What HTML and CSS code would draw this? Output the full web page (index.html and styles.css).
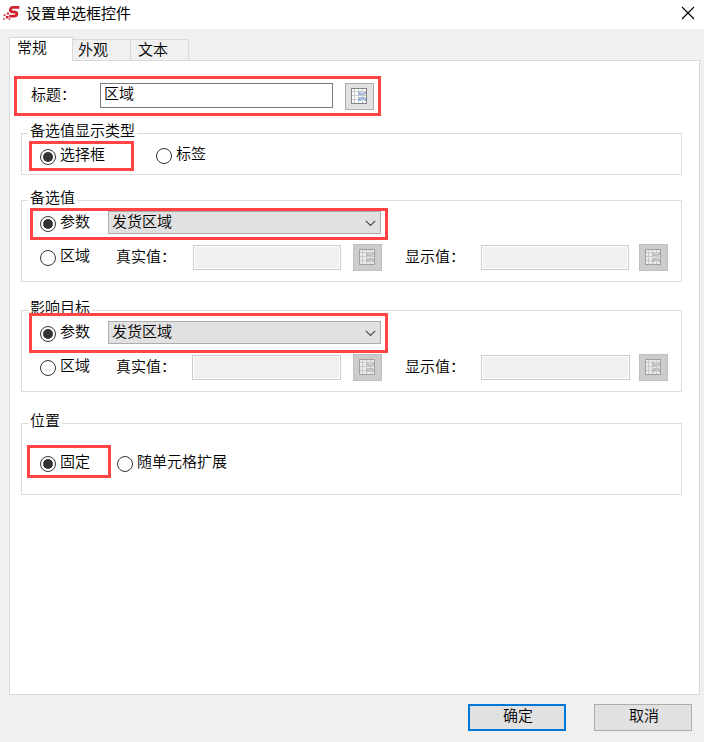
FILE: index.html
```html
<!DOCTYPE html>
<html lang="zh-CN">
<head>
<meta charset="utf-8">
<title>设置单选框控件</title>
<link rel="stylesheet" href="styles.css">
</head>
<body>
<svg class="defs" width="0" height="0" aria-hidden="true">
  <symbol id="grid" viewBox="0 0 16 16">
    <rect x=".5" y=".5" width="15" height="15" fill="#fff" stroke="#858585"/>
    <path d="M3.5 1v14M7.5 1v14M11.5 1v14M1 3.5h14M1 7.5h14M1 11.5h14" stroke="#c9c9cd" fill="none"/>
    <path d="M7 4h3v1h1v2h-3V6H7zM12 5h1V4h2v2h-1v1h-2zM8 9h3v3h-1v1H7v-2h1zM12 9h2v1h1v3h-2v-1h-1z" fill="#93b5dc"/>
    <path d="M9 5h1v1H9zM13 6h1v1h-1zM9 10h1v1H9zM13 11h1v1h-1z" fill="#c2d8f0"/>
  </symbol>
</svg>
<div class="dialog">
  <header class="titlebar">
    <svg class="logo" width="18" height="18" viewBox="0 0 18 18">
      <path d="M16.4 2.4H10.2Q7.9 2.4 7.4 4.7Q7 6.7 9.4 6.9L12.2 7.2Q14.2 7.5 13.8 9.2Q13.4 11.1 11.4 11.1H6.2" fill="none" stroke="#cf1f2b" stroke-width="2.8"/>
      <path d="M3.9 7.4h2v2h-2zM.7 9.3h1.7V11H.7zM2.9 10.9h2.7v2.7H2.9zM.3 13.2h1.5v1.5H.3zM5.8 13.6h1.5v1.5H5.8z" fill="#cf1f2b"/>
    </svg>
    <h1>设置单选框控件</h1>
    <svg class="close" width="14" height="14" viewBox="0 0 14 14"><path d="M1 1l12 12M13 1L1 13" stroke="#000" stroke-width="1.1"/></svg>
  </header>
  <nav class="tabs"><span class="tab active">常规</span><span class="tab">外观</span><span class="tab">文本</span></nav>
  <main class="panel">
    <div class="title-row">
      <i class="mark mark-title"></i>
      <span class="caption">标题：</span>
      <div class="input">区域</div>
      <div class="pick"><svg width="16" height="16"><use href="#grid"/></svg></div>
    </div>

    <section class="group type">
      <span class="legend">备选值显示类型</span>
      <i class="mark mark-type"></i>
      <div class="options">
        <span class="radio on"></span><span class="label box">选择框</span>
        <span class="radio up"></span><span class="label tag">标签</span>
      </div>
    </section>

    <section class="group values">
      <span class="legend">备选值</span>
      <i class="mark mark-values"></i>
      <div class="param">
        <span class="radio on"></span><span class="label">参数</span>
        <div class="select"><span>发货区域</span><svg width="11" height="7" viewBox="0 0 11 7"><path d="M.8 .9l4.7 4.6L10.2 .9" fill="none" stroke="#444" stroke-width="1.1"/></svg></div>
      </div>
      <div class="area">
        <span class="radio"></span><span class="label">区域</span>
        <span class="field real">真实值：</span><div class="input off"></div><div class="pick off"><svg width="16" height="16"><use href="#grid"/></svg></div>
        <span class="field shown">显示值：</span><div class="input off"></div><div class="pick off last"><svg width="16" height="16"><use href="#grid"/></svg></div>
      </div>
    </section>

    <section class="group target">
      <span class="legend">影响目标</span>
      <i class="mark mark-target"></i>
      <div class="param">
        <span class="radio on"></span><span class="label">参数</span>
        <div class="select"><span>发货区域</span><svg width="11" height="7" viewBox="0 0 11 7"><path d="M.8 .9l4.7 4.6L10.2 .9" fill="none" stroke="#444" stroke-width="1.1"/></svg></div>
      </div>
      <div class="area">
        <span class="radio"></span><span class="label">区域</span>
        <span class="field real">真实值：</span><div class="input off"></div><div class="pick off"><svg width="16" height="16"><use href="#grid"/></svg></div>
        <span class="field shown">显示值：</span><div class="input off"></div><div class="pick off last"><svg width="16" height="16"><use href="#grid"/></svg></div>
      </div>
    </section>

    <section class="group place">
      <span class="legend">位置</span>
      <i class="mark mark-place"></i>
      <div class="options">
        <span class="radio on"></span><span class="label fixed">固定</span>
        <span class="radio"></span><span class="label">随单元格扩展</span>
      </div>
    </section>
  </main>
  <footer class="actions"><div class="button primary">确定</div><div class="button">取消</div></footer>
</div>
</body>
</html>
```

FILE: styles.css
```css
* { box-sizing: border-box; }
body {
  margin: 0;
  background: #f0f0f0;
  color: #000;
  font: 350 15px/16px "Noto Sans CJK SC", sans-serif;
}
.defs { display: block; position: absolute; }
.dialog { display: flex; flex-direction: column; width: 704px; height: 742px; }
svg { display: block; flex: none; }

.titlebar { display: flex; flex: none; height: 29px; padding: 5px 9px 0 3px; background: #fff; }
.titlebar h1 { flex: 1; margin: 0 0 0 5px; font-size: 15px; font-weight: 400; }
.close { margin-top: 1px; }

.tabs { display: flex; flex: none; align-items: flex-end; height: 31px; padding-left: 9px; }
.tab {
  width: 58px; height: 21px; padding: 1px 0 0 5px;
  border: 1px solid #d9d9d9; border-left: 0; border-bottom: 0;
}
.tab + .tab + .tab { padding-left: 7px; }
.tab.active {
  position: relative; z-index: 1;
  width: 64px; height: 24px; margin-bottom: -1px; padding: 1px 0 0 7px;
  border-left: 1px solid #d9d9d9; background: #fff;
}

.panel {
  flex: none; width: 691px; height: 635px; margin-left: 9px; padding: 22px 0 0 11px;
  border: 1px solid #d9d9d9; background: #fff;
}
.title-row { position: relative; display: flex; align-items: flex-start; height: 50px; padding-left: 10px; }
.caption { width: 69px; padding-top: 3px; }
.input { flex: none; width: 233px; height: 25px; padding: 1px 3px; border: 1px solid #7a7a7a; background: #fff; }
.input.off { width: 148px; margin-top: 1px; border-color: #ccc; background: #f0f0f0; box-shadow: inset 0 0 0 1px #fff; }
.pick { flex: none; width: 29px; height: 27px; margin-left: 12px; padding: 4px 5px; border: 1px solid #adadad; background: #e1e1e1; }
.pick.off { border-color: #bfbfbf; background: #ccc; }
.pick.off svg { filter: grayscale(1); opacity: .6; }
.pick.last { margin-left: 10px; }

.group { position: relative; width: 661px; border: 1px solid #dcdcdc; }
.legend { position: absolute; left: 6px; top: -12px; padding: 0 2px; background: #fff; white-space: nowrap; }
.type { height: 42px; }
.values { height: 82px; margin-top: 25px; }
.target { height: 82px; margin-top: 28px; }
.place { height: 72px; margin-top: 31px; }
.type .options { padding-top: 12px; }
.place .options { padding-top: 29px; }
.options, .param, .area { display: flex; align-items: flex-start; padding-left: 18px; }

.radio {
  display: grid; flex: none; place-items: center;
  width: 16px; height: 16px; margin-top: 3px;
  border: 1px solid #333; border-radius: 50%; background: #fff;
}
.radio.up { margin-top: 2px; }
.radio.on::after { content: ""; width: 10px; height: 10px; border-radius: 50%; background: #333; }
.label { padding-left: 4px; white-space: nowrap; }
.label.box { width: 100px; }
.label.tag { margin-top: -1px; }
.label.fixed { width: 61px; }

.param { height: 33px; padding-top: 10px; }
.param .radio { margin-top: 5px; }
.param .label { width: 52px; padding-top: 2px; }
.select {
  display: flex; justify-content: space-between; width: 273px; height: 23px;
  padding: 1px 4px 0 3px; border: 1px solid #adadad; background: #e1e1e1;
}
.select svg { margin-top: 7px; }
.area { padding-top: 10px; }
.area .radio { margin-top: 6px; }
.area .label { width: 60px; padding-top: 3px; }
.field { flex: none; padding-top: 4px; white-space: nowrap; }
.real { width: 77px; }
.shown { width: 76px; margin-left: 23px; }
.target .real { width: 76px; }
.target .input { width: 149px; }
.target .pick.last { margin-left: 9px; }

.mark { position: absolute; z-index: 2; border: 3px solid #ff4444; }
.mark-title { left: -7px; top: -7px; width: 367px; height: 40px; }
.mark-type { left: 7px; top: 7px; width: 105px; height: 30px; }
.mark-values { left: 8px; top: 7px; width: 358px; height: 32px; }
.mark-target { left: 7px; top: 2px; width: 359px; height: 40px; }
.mark-place { left: 5px; top: 21px; width: 84px; height: 33px; }

.actions { display: flex; gap: 28px; padding: 9px 0 0 468px; }
.button { width: 98px; height: 27px; padding: 2px 0 0 2px; border: 1px solid #adadad; background: #e1e1e1; text-align: center; }
.button.primary { padding-top: 1px; border: 2px solid #0078d7; }
```
